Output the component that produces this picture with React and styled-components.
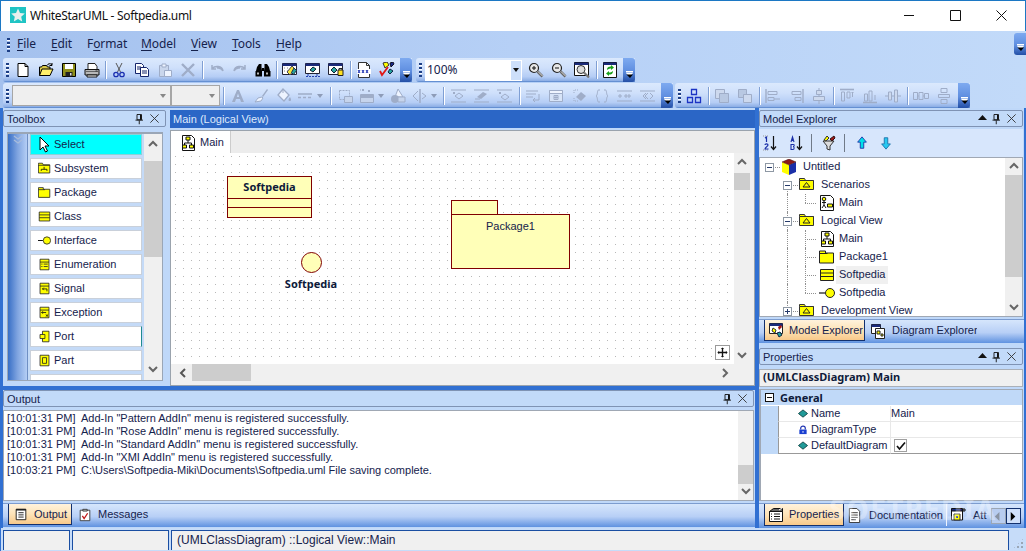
import React from "react";
import styled, { createGlobalStyle } from "styled-components";

const Global = createGlobalStyle`
  html, body { margin: 0; padding: 0; background: #fff; overflow: hidden; }
  * { box-sizing: border-box; }
`;
const UI = `"Noto Sans", "Open Sans", sans-serif`;
const TXT = `"Liberation Sans", Arial, sans-serif`;
const INK = "#15224c";

const Window = styled.div`
  width: 1026px; height: 551px; display: flex; flex-direction: column; overflow: hidden;
  font: 11px/1 ${TXT}; color: ${INK}; background: #bcd5f8; position: relative;
`;
const TitleBar = styled.header`
  height: 31px; flex: none; background: #fff; border-top: 1px solid #1c78c4; display: flex; align-items: center;
  padding: 0 1px 2px 9px; border-left: 1px solid #1c78c4; border-right: 1px solid #1c78c4;
`;
const TitleText = styled.span`
  font: 12px ${UI}; color: #111; margin-left: 4px; flex: 1; letter-spacing: -0.3px;
`;
const WinBtn = styled.div`
  width: 46px; height: 28px; display: flex; align-items: center; justify-content: center; color: #111;
`;
const Chrome = styled.div`
  flex: none; height: 77px; display: flex; flex-direction: column;
  background: linear-gradient(90deg, #a4c1ee 0%, #b6d0f6 50%, #c2daf9 100%);
`;
const MenuBar = styled.nav`
  height: 27px; display: flex; align-items: center; padding-left: 5px; position: relative;
`;
const MenuItem = styled.span`
  font: 12px ${UI}; color: ${INK}; width: ${p => p.$w}px; position: relative; top: -1px; letter-spacing: -0.1px;
  u { text-decoration: underline; text-underline-offset: 2px; }
`;
const Grip = styled.i`
  width: 3px; height: 14px; flex: none; display: block; margin: 0 ${p => p.$after || 5}px 0 ${p => p.$before || 2}px;
  background: repeating-linear-gradient(180deg, #1d3f86 0 2px, #fff 2px 2.6px, transparent 2.6px 4px);
`;
const ToolRow = styled.div`
  height: 25px; display: flex; padding-left: 3px; align-items: stretch;
`;
const Pill = styled.div`
  height: ${p => p.$h || 24}px; margin-left: ${p => p.$ml || 0}px; display: flex; align-items: center; padding-left: 1px;
  background: linear-gradient(180deg, #dbe9fd 0%, #cfe0fb 40%, #b5cdf5 78%, #8fb0e6 94%, #4f7fc8 100%);
  border-radius: 3px 0 0 3px;
`;
const ToolBtn = styled.div`
  width: ${p => p.$w || 23}px; height: 22px; flex: none; display: flex; align-items: center; justify-content: center; gap: 3px;
`;
const Sep = styled.i`
  width: ${p => p.$w || 5}px; flex: none; height: 18px; display: block; position: relative;
  &::after { content: ""; position: absolute; left: 50%; top: 0; height: 18px; width: 2px; background: linear-gradient(90deg, #7f9fd4 50%, #fff 50%); }
`;
const Chev = styled.div`
  width: 12px; height: ${p => p.$h || 25}px; flex: none; margin-left: ${p => p.$ml || 2}px; border-radius: 0 3px 3px 0;
  background: linear-gradient(180deg, #7eaaf0 0%, #5f8ee0 55%, #234fa6 100%);
  display: flex; align-items: flex-end; justify-content: center; padding-bottom: 3px;
`;
const MenuChev = styled(Chev)`
  position: absolute; right: 0; top: 2px; border-radius: 3px 0 0 3px; margin: 0;
`;
const FontCombo = styled.div`
  width: ${p => p.$w}px; height: 21px; flex: none; background: #efefef; border: 1.5px solid #a6a6a6;
  display: flex; align-items: center; justify-content: flex-end; padding-right: 4px;
`;
const ZoomCombo = styled.div`
  width: 97px; height: 21px; flex: none; background: #fff; display: flex; align-items: stretch; margin-right: 2px;
  font: 12px ${UI}; color: ${INK};
`;
const ZoomVal = styled.span`flex: 1; padding: 1px 0 0 2px;`;
const ZoomDrop = styled.span`
  width: 12px; background: #cddffa; border: 1px solid #fff;
  display: flex; align-items: center; justify-content: center;
`;
const Caret = styled.i`
  width: 0; height: 0; display: block; border-left: 3.5px solid transparent; border-right: 3.5px solid transparent;
  border-top: 4px solid ${p => p.$c || "#111"};
`;

const Dock = styled.main`
  flex: none; height: 420px; display: flex; padding: 0 2px 0 3px; gap: 4px; background: #3170d2;
`;
const LeftCol = styled.div`width: 752px; flex: none; display: flex; flex-direction: column; gap: 4px;`;
const TopRow = styled.div`height: 278px; flex: none; display: flex; background: #bcd5f8;`;
const RightCol = styled.div`width: 265px; flex: none; display: flex; flex-direction: column; background: #bcd5f8;`;

const Panel = styled.section`
  width: ${p => p.$w ? p.$w + "px" : "auto"}; flex: ${p => p.$w || p.$h ? "none" : 1}; height: ${p => p.$h ? p.$h + "px" : "auto"};
  display: flex; flex-direction: column; background: #bfd8f9; position: relative; min-width: 0;
`;
const PanelHead = styled.div`
  height: 17px; flex: none; margin: ${p => p.$m || "2px 1px 0 0"}; border: 1px solid #7f93b4; border-radius: 2px;
  background: #c2daf9; display: flex; align-items: center; padding: 0 5px 0 3px; font-size: 11px; color: ${INK};
`;
const HeadTitle = styled.span`flex: 1; position: relative; top: 1px;`;
const HeadIcons = styled.div`display: flex; align-items: center; gap: 3px;`;

const ToolFrame = styled.div`
  margin: 5px 4px 0; height: 249px; border: 1px solid #9aa6b6; border-top-width: 2px; display: flex; background: #f0f0f0; overflow: hidden;
`;
const Strip = styled.div`
  width: 20px; flex: none; background: linear-gradient(90deg, #386fc6 0%, #7fa4e0 50%, #b5cef5 100%); border-right: 1px solid #6f8fc4;
  display: flex; justify-content: center; padding-top: 1px;
`;
const ToolList = styled.div`
  width: 116px; flex: none; background: #c4daf7; padding: 0 2px 0 2px; overflow: hidden; display: flex; flex-direction: column; gap: 3px;
`;
const ToolItem = styled.div`
  flex: none; height: 21px; background: ${p => p.$on ? "#00ffff" : "#fff"}; border: 1px solid ${p => p.$on ? "#8ad2d8" : "#c9d0da"};
  border-right-color: ${p => p.$hot ? "#1f8a90" : p.$on ? "#8ad2d8" : "#c9d0da"};
  display: flex; align-items: center; padding-left: 7px; font-size: 11px; color: ${INK}; white-space: nowrap;
`;
const ToolIconBox = styled.span`width: 16px; display: flex; justify-content: flex-start; flex: none;`;

const ScrollV = styled.div`
  width: ${p => p.$w || 17}px; flex: none; background: #f0f0f0; display: flex; flex-direction: column; align-items: stretch;
`;
const ScrollBtn = styled.div`
  height: ${p => p.$h || 17}px; flex: none; display: flex; align-items: center; justify-content: center;
`;
const ScrollTrack = styled.div`flex: 1; min-height: 0; padding-top: ${p => p.$t || 0}px;`;
const ThumbV = styled.div`height: ${p => p.$h}px; background: #cdcdcd;`;
const ScrollH = styled.div`
  height: 17px; flex: none; display: flex; align-items: stretch; background: #f0f0f0; padding-left: 4px;
`;
const ScrollHBtn = styled.div`width: 17px; flex: none; display: flex; align-items: center; justify-content: center;`;
const TrackH = styled.div`flex: 1;`;
const ThumbH = styled.div`width: ${p => p.$w}px; height: 100%; background: #cdcdcd;`;

const MainHead = styled.div`
  height: 18px; margin: 2px 0 0 3px; flex: none; background: #2b66c6; color: #dfe9fb; display: flex; align-items: center; padding-left: 3px; font-size: 11px;
`;
const MainFrame = styled.div`
  margin: 2px 0 0 3px; flex: 1; min-height: 0; border: 1px solid #9aa3ad; background: #f0f0f0; display: flex; flex-direction: column;
  padding-right: 2px;
`;
const DocTabs = styled.div`height: 22px; flex: none; background: #ececec; display: flex;`;
const DocTab = styled.div`
  width: 60px; background: #fff; display: flex; align-items: center; padding-left: 9px; gap: 4px; border-right: 1px solid #ccc; font-size: 11px; color: ${INK};
  height: 23px; position: relative;
`;
const CanvasGrid = styled.div`
  flex: 1; min-height: 0; display: grid; grid-template-columns: 1fr 18px; grid-template-rows: 1fr 17px; margin-bottom: 4px;
`;
const Canvas = styled.div`
  position: relative; background-color: #fff; overflow: hidden;
  background-image: radial-gradient(circle at .5px .5px, #b8b8b8 .6px, transparent .7px);
  background-size: 8px 8px; background-position: 4px 3px;
`;
const ClassBox = styled.div`
  position: absolute; left: 56px; top: 23px; width: 85px; height: 42px; background: #ffffb8; border: 1px solid #800000;
  display: flex; flex-direction: column;
`;
const ClassName = styled.div`
  height: 22px; font: 700 11px/1 ${UI}; color: #0e1a3a; text-align: center; padding-top: 4px; border-bottom: 1px solid #800000;
`;
const ClassSlot = styled.div`height: 9px; border-bottom: 1px solid #800000;`;
const PkgTab = styled.div`
  position: absolute; left: 280px; top: 47px; width: 47px; height: 15px; background: #ffffb8; border: 1px solid #800000; border-bottom: 0;
`;
const PkgBody = styled.div`
  position: absolute; left: 280px; top: 61px; width: 119px; height: 55px; background: #ffffb8; border: 1px solid #800000;
  text-align: center; padding-top: 6px; font-size: 11px; color: ${INK};
`;
const Lollipop = styled.div`
  position: absolute; left: 130px; top: 99px; width: 21px; height: 21px; border-radius: 50%; background: #ffffb8; border: 1px solid #800000;
`;
const LollipopLabel = styled.div`
  position: absolute; left: 100px; width: 80px; top: 125px; text-align: center; font: 700 11px/1 ${UI}; color: #0e1a3a;
`;
const NavBtn = styled.div`
  position: absolute; right: 4px; bottom: 4px; width: 15px; height: 15px; background: #fff; border: 1px solid #9a9a9a;
  display: flex; align-items: center; justify-content: center;
`;

const OutputPanel = styled(Panel)`height: 138px; flex: none;`;
const OutFrame = styled.div`
  margin: 3px 1px 0 0; height: 91px; flex: none; border: 1px solid #a0a8b4; background: #fff; display: flex;
`;
const OutList = styled.div`flex: 1; padding: 1px 0 0 3px;`;
const OutRow = styled.div`
  height: 13px; display: flex; font-size: 11px; line-height: 13px; white-space: nowrap; color: ${INK};
`;
const OutTime = styled.span`width: 74px; flex: none;`;
const TabBar = styled.div`
  height: ${p => p.$h || 24}px; margin-top: ${p => p.$mt || 2}px; flex: none; display: flex; align-items: flex-start; padding-left: ${p => p.$pl || 5}px; position: relative; overflow: hidden;
  background: linear-gradient(180deg, #d6e6fc 0%, #b7cff6 55%, #5f92e0 100%);
  border-top: 1px solid #7c9ccf;
`;
const Tab = styled.div`
  height: ${p => p.$h || 21}px; width: ${p => p.$w}px; flex: none; display: flex; align-items: center; padding-left: ${p => p.$pl || 6}px; gap: ${p => p.$gap || 7}px;
  font-size: 11px; color: ${INK}; white-space: nowrap; overflow: hidden;
  ${p => p.$on ? `background: linear-gradient(180deg, #fff2dc 0%, #fde3b8 50%, #f8c98a 100%); border: 1px solid #12306e; border-top: 0;` : ""}
  ${p => p.$div ? `border-left: 1px solid #eef4ff;` : ""}
`;
const ModelBar = styled.div`
  height: 28px; margin: 2px 1px 0 0; flex: none; background: #d7e6fc; display: flex; align-items: center;
`;
const MBtn = styled.div`width: ${p => p.$w || 25}px; flex: none; display: flex; justify-content: center;`;
const MSep = styled.i`width: 1px; height: 18px; background: #707a88; margin: 0 ${p => p.$r}px 0 ${p => p.$l}px; display: block;`;
const TreeFrame = styled.div`
  height: 160px; flex: none; margin-right: 1px; border: 1px solid #a0a8b4; background: #fff; display: flex; overflow: hidden;
`;
const Tree = styled.div`flex: 1; overflow: hidden;`;
const TreeRow = styled.div`height: 18px; display: flex; align-items: center; font-size: 11px; color: ${INK};`;
const Cell = styled.span`
  width: 18px; height: 18px; flex: none; position: relative; display: block;
  &::before { content: ""; position: absolute; left: 9px; top: ${p => p.$v === "top" || !p.$v ? "9px" : "0"};
    bottom: ${p => p.$v === "end" ? "9px" : "0"}; border-left: 1px dotted ${p => p.$v ? "#909090" : "transparent"}; }
  &::after { content: ""; position: absolute; left: 9px; top: 9px; width: 11px; border-top: 1px dotted ${p => p.$h ? "#909090" : "transparent"}; }
`;
const Expander = styled.b`
  position: absolute; left: 5px; top: 5px; width: 9px; height: 9px; background: #fff; border: 1px solid #8e98a4; z-index: 1; display: block; font-weight: 400;
  &::before { content: ""; position: absolute; left: 1px; right: 1px; top: 3px; height: 1px; background: #253a6a; }
  &::after { content: ""; position: absolute; top: 1px; bottom: 1px; left: 3px; width: 1px; background: ${p => p.$plus ? "#253a6a" : "transparent"}; }
`;
const TreeIcon = styled.span`width: 16px; margin: 0 ${p => p.$deep ? 1 : 3}px 0 ${p => p.$deep ? 5 : 3}px; display: flex; justify-content: center; flex: none; position: relative; background: #fff; z-index: 1;`;
const TreeLabel = styled.span`
  padding: 3px 3px; height: 18px; background: ${p => p.$sel ? "#f0f0f0" : "transparent"}; white-space: nowrap;
`;
const SubHead = styled.div`
  height: 18px; margin: 4px 1px 0 0; flex: none; background: #f0f0f0; border: 1px solid #aab0b8; font: 700 11px/1 ${UI}; color: #0e1a3a;
  padding: 1px 0 0 3px;
`;
const PropFrame = styled.div`
  height: 112px; margin: 2px 1px 0 0; flex: none; border: 1px solid #a0a8b4; border-left-width: 2px; background: #fff;
`;
const PropGroup = styled.div`
  height: 16px; background: #c0d9f8; border-bottom: 1px solid #fff; display: flex; align-items: center; font: 700 11px/1 ${UI}; color: #0e1a3a;
`;
const GroupBox = styled.span`
  width: 9px; height: 9px; border: 1px solid #111; margin: 0 6px 0 4px; position: relative; display: block; background: #fff;
  &::before { content: ""; position: absolute; left: 1px; right: 1px; top: 3px; height: 1px; background: #111; }
`;
const PropRow = styled.div`
  height: 16px; display: grid; grid-template-columns: 17px 113px 1fr; font-size: 11px; color: ${INK};
`;
const PropGutter = styled.span`background: #c0d9f8;`;
const PropName = styled.span`
  border-right: 1px solid #e8e8e8; border-bottom: 1px solid ${p => p.$last ? "#999" : "#e8e8e8"}; border-left: 1px solid #999; display: flex; align-items: center; padding-left: 29px; gap: 3px;
`;
const PropVal = styled.span`
  border-bottom: 1px solid ${p => p.$last ? "#999" : "#e8e8e8"}; display: flex; align-items: center; padding-left: ${p => p.$pl || 0}px;
`;
const PropIcon = styled.span`margin-left: -10px; display: flex; width: 10px; justify-content: center;`;
const Check = styled.span`
  width: 13px; height: 13px; border: 1px solid #a0a0a0; background: #fff; display: flex; align-items: center; justify-content: center;
`;
const ArrowBtn = styled.div`
  position: absolute; top: 4px; left: ${p => p.$l}px; width: 15px; height: 16px; display: flex; align-items: center; justify-content: center;
  border: 1px solid ${p => p.$on ? "#12306e" : "#9aa6b6"}; background: ${p => p.$on ? "#cfe0fb" : "#b8cdf0"};
`;
const Watermark = styled.div`
  position: absolute; left: 70px; bottom: 0px; font: 700 29px ${UI}; color: rgba(255,255,255,.28); letter-spacing: 1px; pointer-events: none;
`;
const StatusBar = styled.footer`
  height: 23px; flex: none; background: #c6dcf9; padding: 2px 0 1px 2px; display: flex; gap: 2px; border-left: 1px solid #3170d2; position: relative;
`;
const StatusPane = styled.div`
  width: ${p => p.$w}px; background: #f0f0f0; border: 1px solid #1a4ea2; border-bottom: 0; font-size: 12px; padding: 3px 0 0 5px; color: ${INK}; white-space: nowrap;
`;
const Resize = styled.div`
  position: absolute; right: 2px; bottom: 2px; width: 11px; height: 11px;
  background: radial-gradient(circle at 1px 1px, #9aa6b6 1px, transparent 1.1px) 0 0 / 4px 4px;
  clip-path: polygon(100% 0, 100% 100%, 0 100%);
`;

const Svg = styled.svg`display: block; flex: none;`;
const G = "#9fadc8"; const W = "#eef4ff"; const N = "#14246b"; const Y = "#ffff00";
const icons = {
  new: <><path d="M3 1.500h7l3 3v10H3z" fill="#fff" stroke="#000"/><path d="M10 1.500v3h3" fill="none" stroke="#000"/></>,
  open: <><path d="M1.500 13.500V5h2l1-1.500h4L9.500 5H12v2" fill="#d8c84a" stroke="#000"/><path d="M1.500 13.500l2.500-6.500h11l-3 6.500z" fill="#ffef6a" stroke="#000"/><path d="M9 3.500C10 1.500 12 1.200 14 2.500M14 1v2.500h-2.500" fill="none" stroke="#000"/></>,
  save: <><path d="M1.500 1.500h13v13h-13z" fill="#8f8f1a" stroke="#000"/><path d="M4 2h8v5H4z" fill="#fff"/><path d="M4.500 10h7v4.500h-7z" fill="#222"/><path d="M9 11h1.500v2.500H9z" fill="#ddd"/></>,
  print: <><path d="M4 1.500h7l2 3v3H4z" fill="#fff" stroke="#222"/><path d="M1 7.500h14v5.500H1z" fill="#b8b8b8" stroke="#111"/><path d="M3 13h10v2H3z" fill="#fff" stroke="#111"/><path d="M2 9.500h12" stroke="#666"/><path d="M11.500 8.500h2v1h-2z" fill="#333"/></>,
  cut: <><path d="M5 1l4.500 9M11 1l-4.500 9" stroke="#555" fill="none"/><circle cx="5" cy="12.500" r="2.200" fill="none" stroke="#1b2fb0" strokeWidth="1.300"/><circle cx="11" cy="12.500" r="2.200" fill="none" stroke="#1b2fb0" strokeWidth="1.300"/></>,
  copy: <><path d="M1.500 1.500h6l2 2v8h-8z" fill="#fff" stroke={N}/><path d="M6.500 5.500h6l2 2v7h-8z" fill="#fff" stroke={N}/><path d="M3 5h4M3 7h3M8 9h5M8 11h5" stroke={N}/></>,
  paste: <><path d="M2.500 3.500h9v11h-9z" fill="#c9d6ec" stroke={G}/><path d="M5 2h4v3H5z" fill={W} stroke={G}/><path d="M7.500 8.500h7v6h-7z" fill={W} stroke={G}/></>,
  del: <path d="M2 2l12 12M14 2L2 14" stroke={G} strokeWidth="2.400"/>,
  undo: <path d="M3 6.500c3-3 10-3 11 2.500-1-2-3-3.500-6-3M3 3v4h4" fill="none" stroke={G} strokeWidth="1.500"/>,
  redo: <path d="M13 6.500c-3-3-10-3-11 2.500 1-2 3-3.500 6-3M13 3v4H9" fill="none" stroke={G} strokeWidth="1.500"/>,
  binoc: <><path d="M4 2h2.500v3L7 9H1l1-4zM9.500 2H12l2 3 1 4H9l.500-4z" fill="#000"/><path d="M.5 9h6.500v5.500H.5zM9 9h6.500v5.500H9z" fill="#000"/><path d="M7 6h2v3H7z" fill="#000"/><path d="M2 10.500h2v2H2zM11 10.500h2v2h-2z" fill="#bbb"/></>,
  d1: <><path d="M.5 1.500h14v11H.5z" fill="#fff" stroke="#223"/><path d="M.5 1.500h14V4H.5z" fill="#1a2a7a"/><path d="M2 6h1M5 6h1M2 9h1M5 9h1" stroke="#888"/><path d="M10 4l3 3-5 6-3-3z" fill="#f4e23c" stroke="#445"/><path d="M12 6l2.500 2.500-3 4-2-2z" fill="#29a3a0" stroke="#234"/></>,
  d2: <><path d="M.5 1.500h14v10H.5z" fill="#fff" stroke="#223"/><path d="M.5 1.500h14V4H.5z" fill="#1a2a7a"/><path d="M8 5l3 2-3 3-3-2z" fill="#2aa6a0" stroke="#123"/><path d="M1 14.500h14" stroke="#2340b0" strokeDasharray="2 1"/><path d="M3 12v2M12 12v2" stroke="#2340b0"/></>,
  d3: <><path d="M.5 1.500h14v11H.5z" fill="#fff" stroke="#223"/><path d="M.5 1.500h14V4H.5z" fill="#1a2a7a"/><path d="M6 5l3 3-3 3-3-3z" fill="#2aa6a0" stroke="#123"/><path d="M10 8h5v5.500h-5z" fill="#ffe020" stroke="#222"/><path d="M11 8V6.500h3V8" fill="none" stroke="#222"/></>,
  xml: <><path d="M2.500.5h8l3 3v12h-11z" fill="#fff" stroke="#333"/><path d="M10.500.5v3h3" fill="none" stroke="#333"/><path d="M1 7h14v5H1z" fill="#fff"/><path d="M2 8l2 3M4 8l-2 3M6 8l2 3M8 8l-2 3M10 8l2 3M12 8l-2 3" stroke="#1a2fb0"/></>,
  tools: <><path d="M4 1l4-1 2 3-4 3z" fill={Y} stroke="#333"/><path d="M11 1l3-1 1 2-3 3z" fill="#1a2a8a" stroke="#112"/><path d="M1 9l2 4 6-8" fill="none" stroke="#e01818" strokeWidth="1.800"/><path d="M11 7l3 2-3 3-2-2z" fill="#23a5a0" stroke="#124"/></>,
  zin: <><circle cx="6" cy="6" r="4.500" fill="#e8e8e8" stroke="#222" strokeWidth="1.200"/><path d="M4 6h4M6 4v4" stroke="#111"/><path d="M9.500 9.500l5 5" stroke="#666" strokeWidth="2.600"/><path d="M10 9.500l4.500 4.500" stroke="#ddd"/></>,
  zout: <><circle cx="6" cy="6" r="4.500" fill="#e8e8e8" stroke="#222" strokeWidth="1.200"/><path d="M4 6h4" stroke="#111"/><path d="M9.500 9.500l5 5" stroke="#666" strokeWidth="2.600"/><path d="M10 9.500l4.500 4.500" stroke="#ddd"/></>,
  zfit: <><path d="M.5.5h14v13H.5z" fill="#fff" stroke="#111"/><path d="M.5.5h14V3H.5z" fill="#1a2a7a"/><circle cx="7" cy="7.500" r="4" fill="#ddd" stroke="#333"/><path d="M10 10.500l5 5" stroke="#777" strokeWidth="2.200"/></>,
  refresh: <><path d="M1.500.5h13v15h-13z" fill="#fff" stroke="#111"/><path d="M1.500.5h13V3h-13z" fill="#1a2a7a"/><path d="M5 8c0-3 2-3.500 4-3.500V3l3 2.500L9 8V6.500C7.500 6.500 6.500 7 5 8z" fill="#1aa01a"/><path d="M11 9c0 3-2 3.500-4 3.500V14l-3-2.500L7 9v1.500c1.500 0 2.500-.5 4-1.500z" fill="#1aa01a"/></>,
  fontA: <path d="M2 14L7 2h2l5 12h-3l-1-3H6l-1 3zM6.800 9h2.400L8 5.500z" fill={G}/>,
  brush: <><path d="M9 8l5-7 1 1-5 7z" fill={G}/><path d="M5 10l4-1 1 1-2 3-6 1z" fill={W} stroke={G}/></>,
  bucket: <><path d="M7 1l6 6-5 6-6-6z" fill={W} stroke={G} strokeWidth="1.300"/><path d="M7 1V5" stroke={G}/><path d="M14 9c1 2 1.500 3 .5 4h-1.500c-1-1-.500-2 1-4z" fill={G}/></>,
  line: <path d="M0 6h14M0 9.500h3M5 9.500h3M10 9.500h3" stroke={G} strokeWidth="1.600"/>,
  shadow: <><path d="M1.500 2.500h10v9h-10z" fill="none" stroke={G} strokeDasharray="2 1"/><path d="M6.500 8.500h8v6h-8z" fill="#c6d4ec" stroke={G}/></>,
  fill2: <><path d="M1 2h1M3 1l2 2M5 1L3 3M9 2l2 2M11 2L9 4" stroke={G}/><path d="M1.500 6.500h13v8h-13z" fill="#c6d4ec" stroke={G}/><path d="M2 7h12v3H2z" fill={G}/></>,
  shape: <><path d="M8 1l5 8H5z" fill={W} stroke={G}/><circle cx="5" cy="11" r="4" fill={G}/><path d="M8 9h7v5H8z" fill="#c6d4ec" stroke={G}/></>,
  arrows: <><path d="M8 1v14" stroke={G} strokeWidth="1.500"/><path d="M6 3L1 8l5 5M10 5l4 3-4 3" fill="none" stroke={G}/></>,
  hdr1: <><path d="M0 2h15M0 14h15" stroke={G}/><path d="M8 5l4 3-4 3-4-3z" fill="none" stroke={G}/><path d="M2 4l2 2M4 4L2 6" stroke={G}/></>,
  hdr2: <><path d="M0 2h15M0 14h15M1 11h5" stroke={G}/><path d="M3 9l6-5 4 2-6 5z" fill={G}/></>,
  hdr3: <><path d="M0 2h15M0 14h15" stroke={G}/><path d="M8 6l4 3-4 3-4-3z" fill="none" stroke={G}/><path d="M2 4l2 2M4 4L2 6" stroke={G}/></>,
  ret: <><path d="M1 3h12M1 6h10M1 9h7" stroke={G}/><path d="M14 6v6H8M10 10l-2 2 2 2" fill="none" stroke={G}/></>,
  win: <><path d="M1.500 2.500h13v11h-13z" fill="#d7e4f8" stroke={G}/><path d="M1.500 2.500h13v3h-13z" fill={W} stroke={G}/><path d="M6 7.500h4v4H6zM8 7v5M6 9.500h4" stroke={G} fill="none"/></>,
  chain: <><path d="M4 2h4M3 2v3M4 13h4M3 10v3" stroke={G} strokeDasharray="1 1"/><path d="M10 4l5 4-5 5-5-4z" fill={G}/></>,
  brace: <path d="M6 2H4.500C3 2 4 7 2 8c2 1 1 6 2.500 6H6M10 2h1.500C13 2 12 7 14 8c-2 1-1 6-2.500 6H10" fill="none" stroke={G}/>,
  hash: <><path d="M0 3h15M0 13h15" stroke={G}/><path d="M1 8h4M3 6v4M7 8h7M9 6v4M12 6v4" stroke={G}/></>,
  dbl: <><path d="M0 3h15M0 13h15" stroke={G}/><path d="M6 5L3 8l3 3M10 5l3 3-3 3" fill="none" stroke={G}/><path d="M8 5L5 8l3 3" fill="none" stroke={G}/></>,
  org: <path d="M5.500 1.500h5v5h-5zM1.500 9.500h5v5h-5zM9.500 9.500h5v5h-5z" fill="none" stroke="#1c34c4" strokeWidth="1.300"/>,
  front: <><path d="M1.500 1.500h9v9h-9z" fill="#cdd9ee" stroke={G}/><path d="M5.500 5.500h9v9h-9z" fill="#b8c8e2" stroke={G}/></>,
  back: <><path d="M1.500 1.500h8v8h-8z" fill="#b8c8e2" stroke={G}/><path d="M6.500 6.500h8v8h-8z" fill="#cdd9ee" stroke={G}/></>,
  al1: <><path d="M1 1v14" stroke={G} strokeWidth="1.400"/><path d="M3 3.500h9v3H3zM3 9.500h6v3H3z" fill="none" stroke={G}/><path d="M15 11h-6" stroke={G}/></>,
  al2: <><path d="M15 1v14" stroke={G} strokeWidth="1.400"/><path d="M4 3.500h9v3H4zM7 9.500h6v3H7z" fill="none" stroke={G}/></>,
  al3: <><path d="M8 0v16" stroke={G}/><path d="M5.500 2.500h5v4h-5zM2.500 8.500h11v4h-11z" fill="#cdd9ee" stroke={G}/></>,
  al4: <><path d="M1 1.500h14" stroke={G} strokeWidth="1.600"/><path d="M2.500 4h3v9h-3zM8 4h3v6H8z" fill="none" stroke={G}/><path d="M13.500 9V4M12.500 5l1-1 1 1" fill="none" stroke={G}/></>,
  al5: <><path d="M1 14.500h14" stroke={G} strokeWidth="1.600"/><path d="M2.500 6h3v7h-3zM7 3h3v10H7z" fill="none" stroke={G}/><path d="M13 7v5" stroke={G}/></>,
  al6: <><path d="M0 8h16" stroke={G}/><path d="M3.500 4h3v8h-3zM9.500 2h3v12h-3z" fill="#cdd9ee" stroke={G}/></>,
  sp1: <><path d="M.5 4.500h4v7h-4zM6 4.500h4v7H6zM11.500 5.500h4v5h-4z" fill="none" stroke={G}/><path d="M4 8h2M10 8h2" stroke={G}/></>,
  sp2: <><path d="M5 .5h6v4H5zM2.500 6.500h11v3h-11zM5 11.500h6v4H5z" fill="none" stroke={G}/></>,
  pin: <><path d="M4 2h6v7H4zM2 9.500h10M7 10v5" stroke="#111" fill="none" strokeWidth="1.200"/><path d="M8 2.500h2v6.500H8z" fill="#111"/></>,
  close: <path d="M1.500 1.500l9 9M10.500 1.500l-9 9" stroke="#333"/>,
  up: <path d="M1 7l4.500-5 4.500 5z" fill="#111"/>,
  mDiag: <><path d="M2.500.5h9l3 3v12h-12z" fill="#fff" stroke="#111"/><path d="M6 2h4v3H6zM2.500 10h4v3h-4zM9.500 10h4v3h-4z" fill={Y} stroke="#111"/><path d="M8 5v3M4.500 10V8h7v2" fill="none" stroke="#111"/></>,
  seq: <><path d="M1.500.5h10l3 3v12h-13z" fill="#fff" stroke="#111"/><circle cx="5" cy="4" r="1.800" fill={Y} stroke="#111"/><path d="M5 6v4M3 7.500h4M5 10l-2 3M5 10l2 3" stroke="#111" fill="none"/><path d="M8.500 9h5v3h-5z" fill={Y} stroke="#111"/></>,
  cube: <><path d="M8 0l7 3-7 3-7-3z" fill="#8b1a1a"/><path d="M1 3l7 3v10l-7-3z" fill={Y}/><path d="M15 3L8 6v10l7-3z" fill="#1a2fa8"/><path d="M8 0l7 3-7 3-7-3z" fill="none" stroke="#401010" strokeWidth=".5"/></>,
  fTri: <><path d="M.5 3.500V1.500h5l1 2h8v9H.5z" fill={Y} stroke="#333"/><path d="M.5 3.500h14" stroke="#333"/><path d="M7.500 5.500l3.500 4.500H4z" fill="none" stroke="#222"/></>,
  folder: <><path d="M.5 2h6v2h8v10H.5z" fill={Y} stroke="#222"/><path d="M.5 4.500h8" stroke="#222"/></>,
  klass: <><path d="M1.500 2.500h13v11h-13z" fill={Y} stroke="#222"/><path d="M1.500 6h13M1.500 9.500h13" stroke="#222"/></>,
  iface: <><circle cx="11" cy="8" r="4.500" fill={Y} stroke="#222"/><path d="M0 8h6" stroke="#111" strokeWidth="1.200"/></>,
  sub: <><path d="M.5 3V1.500h5l1 2h8v10H.5z" fill={Y} stroke="#222"/><path d="M.5 4h14" stroke="#222"/><path d="M4 11V9h7v2M7.500 6v3" fill="none" stroke="#111"/></>,
  enum: <><path d="M2.500 1.500h11v13h-11z" fill={Y} stroke="#222"/><path d="M2.500 5h11" stroke="#222"/><path d="M4 7.500h1.500M7 7.500h5M4 10.500h1.500M7 10.500h5" stroke="#223"/></>,
  signal: <><path d="M2.500 1.500h11v13h-11z" fill={Y} stroke="#222"/><path d="M2.500 5h11" stroke="#222"/><path d="M11 8.500H5.500M7 7L5.500 8.500 7 10M11 8.500v3" fill="none" stroke="#111"/></>,
  exc: <><path d="M2.500 1.500h11v13h-11z" fill={Y} stroke="#222"/><path d="M2.500 5h11" stroke="#222"/><path d="M10 8H4.500M6 6.500L4.500 8 6 9.500M9.500 10.500l3 2.500M12.500 10.500l-3 2.500" fill="none" stroke="#111"/></>,
  port: <><path d="M5.500 1.500h8v13h-8z" fill={Y} stroke="#222"/><path d="M2.500 5.500h6v5h-6z" fill={Y} stroke="#222"/></>,
  part: <><path d="M2.500 1.500h11v13h-11z" fill={Y} stroke="#222"/><path d="M5.500 4.500h5v7h-5z" fill={Y} stroke="#222"/></>,
  assoc: <path d="M0 9h15M8 3v12" stroke="#111"/>,
  cursor: <path d="M2 0v13l3-3 2.500 5 2-1-2.500-5H11z" fill="#fff" stroke="#000"/>,
  tDiag: <><path d="M2.500.5h9l3 3v12h-12z" fill="#fff" stroke="#111"/><path d="M6 2h4v3H6zM2.500 10h4v3h-4zM9.500 10h4v3h-4z" fill={Y} stroke="#111"/><path d="M8 5v3M4.500 10V8h7v2" fill="none" stroke="#111"/></>,
  sort12: <><path d="M0 1h6M0 15h6" stroke="#999" strokeDasharray="1 1"/><path d="M2 3l1.500-1V7M2 10c0-1.500 3-1.500 3 0S2 12 2 14h3.500" fill="none" stroke="#1a2fa8" strokeWidth="1.200"/><path d="M10.500 1v13M8 11.500l2.500 3 2.500-3" fill="none" stroke="#111" strokeWidth="1.200"/></>,
  sortAB: <><path d="M2 7l1.500-5L5 7M2.500 5.500h2M2 9.500h2.500c1 0 1 2-.5 2 1.500 0 1.500 3 0 3H2z" fill="none" stroke="#1a2fa8" strokeWidth="1.100"/><path d="M10.500 1v13M8 11.500l2.500 3 2.500-3" fill="none" stroke="#111" strokeWidth="1.200"/></>,
  funnel: <><path d="M2 6h11L9 11v4l-3-1v-3z" fill="#ddd" stroke="#333"/><path d="M3 5L6 1l2 2-3 3z" fill={Y} stroke="#333"/><path d="M9 4l4-3 1 2-3 3z" fill="#a01818" stroke="#311"/></>,
  arrUp: <path d="M8 1l5 6h-3v7H6V7H3z" fill="#00e0e8" stroke="#1a2fa8"/>,
  arrDn: <path d="M8 15l5-6h-3V2H6v7H3z" fill="#28c8f0" stroke="#1a6fa8"/>,
  tabModel: <><path d="M1.500 1.500h13v10h-13z" fill="#fff" stroke="#222"/><path d="M1.500 1.500h13V4h-13z" fill="#1a2a7a"/><path d="M5 6l3 2-1 3-3-2z" fill={Y} stroke="#333"/><path d="M10 5l3-2 1 2-3 3z" fill="#a01818"/><path d="M9 11l3-1 2 3-3 2z" fill="#23a5a0" stroke="#124"/></>,
  tabDiag: <><path d="M1.500 1.500h9v9h-9z" fill="#fff" stroke="#222"/><path d="M1.500 1.500h9V4h-9z" fill="#1a2a7a"/><path d="M5.500 5.500h9v10h-9z" fill="#fff" stroke="#222"/><path d="M7 8h3v3H7zM11 11h2v2h-2z" fill={Y} stroke="#222"/></>,
  tabProp: <><path d="M1.500 4.500h13v10h-13z" fill="#fff" stroke="#111"/><path d="M1.500 4.500l4-3h9v3z" fill="#666" stroke="#111"/><path d="M3 7h1M6 7h6M3 9.500h1M6 9.500h6M3 12h1M6 12h6" stroke="#111"/><path d="M11 3l3-2" stroke="#fff"/></>,
  tabDoc: <><path d="M2.500.5h8l3 3v12h-11z" fill="#fff" stroke="#333"/><path d="M4.500 5h7M4.500 7.500h7M4.500 10h7M4.500 12.500h5" stroke="#333"/></>,
  tabAttr: <><path d="M.5 1.500h11v4h-11z" fill="#1a2a7a" stroke="#111"/><path d="M.5 4h11v9h-11z" fill="#fff" stroke="#111"/><path d="M3 7h6v6H3z" fill={Y} stroke="#333"/><path d="M5 9l2 2M7 9l-2 2" stroke="#1a2fa8"/><path d="M13 1v4M11 3h4" stroke="#111"/></>,
  tabOut: <><path d="M2.500 2.500h11v12h-11z" fill="#fff" stroke="#111"/><path d="M2.500 2.500h11V4h-11z" fill="#111"/><path d="M5 6.500h6M5 9h6M5 11.500h6" stroke="#111"/></>,
  tabMsg: <><path d="M2.500 2.500h11v12h-11z" fill="#fff" stroke="#333"/><path d="M5.500 1.500h5v2h-5z" fill="#ccc" stroke="#333"/><path d="M5 9l2 3 4-6" fill="none" stroke="#c01818" strokeWidth="1.500"/></>,
  diamond: <path d="M5.500 1l5 4-5 4-5-4z" fill="#1f9a98" stroke="#144"/>,
  lock: <><path d="M3 5V3.500c0-3 5-3 5 0V5" fill="none" stroke="#1a2fb0" strokeWidth="1.300"/><path d="M1.500 5h8v5h-8z" fill="#1a3fd0"/><path d="M5 6.500h1v2H5z" fill="#fff"/></>,
  check: <path d="M1 5l2.500 3L9 1.500" fill="none" stroke="#111" strokeWidth="1.700"/>,
  move: <path d="M6 0l2 2H6.800v3.200H10V4l2 2-2 2V6.800H6.800V10H8l-2 2-2-2h1.200V6.800H2V8L0 6l2-2v1.200h3.200V2H4z" fill="#111" transform="translate(.5 .5)"/>,
  chevUp: <path d="M1 6l4-4 4 4" fill="none" stroke="#666" strokeWidth="2"/>,
  chevDn: <path d="M1 2l4 4 4-4" fill="none" stroke="#666" strokeWidth="2"/>,
  chevL: <path d="M6 1L2 5l4 4" fill="none" stroke="#555" strokeWidth="2"/>,
  chevR: <path d="M2 1l4 4-4 4" fill="none" stroke="#666" strokeWidth="2"/>,
  tChevDn: <path d="M1 1l4 3 4-3M1 5l4 3 4-3" fill="none" stroke="#a8bcdc" strokeWidth="1.300"/>,
  tbChev: <><path d="M1 1h7v1.500H1z" fill="#fff"/><path d="M1 3h7L4.500 7z" fill="#fff"/><path d="M1 1.500h6M1 4h6.500L4.500 7.500z" fill="#000" transform="translate(.5 .5)"/></>,
  triL: <path d="M7 1L2 6l5 5z" fill="#8a94a4"/>,
  triR: <path d="M3 1l5 5-5 5z" fill="#000"/>,
};
const Ico = ({ n, s = 16, vb = 16 }) => <Svg width={s} height={s} viewBox={`0 0 ${vb} ${vb}`} aria-hidden="true">{icons[n]}</Svg>;
const B = ({ n, w }) => <ToolBtn $w={w}><Ico n={n} /></ToolBtn>;
const Bd = ({ n, w }) => <ToolBtn $w={w}><Ico n={n} /><Caret $c="#8e9cb8" /></ToolBtn>;
const ChevGlyph = () => <Svg width="9" height="9" viewBox="0 0 9 9">{icons.tbChev}</Svg>;

const Head = ({ title, up, m }) => (
  <PanelHead $m={m}>
    <HeadTitle>{title}</HeadTitle>
    <HeadIcons>
      {up && <Ico n="up" s={11} vb={11} />}
      <Ico n="pin" s={12} vb={16} />
      <Ico n="close" s={11} vb={12} />
    </HeadIcons>
  </PanelHead>
);
const toolItems = [
  ["cursor", "Select", true], ["sub", "Subsystem"], ["folder", "Package"], ["klass", "Class"], ["iface", "Interface"],
  ["enum", "Enumeration"], ["signal", "Signal"], ["exc", "Exception"], ["port", "Port", false, true], ["part", "Part"], ["assoc", "Association"],
];
const log = [
  ["[10:01:31 PM]", 'Add-In "Pattern AddIn" menu is registered successfully.'],
  ["[10:01:31 PM]", 'Add-In "Rose AddIn" menu is registered successfully.'],
  ["[10:01:31 PM]", 'Add-In "Standard AddIn" menu is registered successfully.'],
  ["[10:01:31 PM]", 'Add-In "XMI AddIn" menu is registered successfully.'],
  ["[10:03:21 PM]", "C:\\Users\\Softpedia-Miki\\Documents\\Softpedia.uml File saving complete."],
];
const tree = [
  { cells: [{ ex: "-" }], icon: "cube", label: "Untitled" },
  { cells: [{}, { v: "top", h: 1, ex: "-" }], icon: "fTri", label: "Scenarios" },
  { cells: [{}, { v: "through" }, { v: "end", h: 1 }], icon: "seq", label: "Main", deep: 1 },
  { cells: [{}, { v: "through", h: 1, ex: "-" }], icon: "fTri", label: "Logical View" },
  { cells: [{}, { v: "through" }, { v: "through", h: 1 }], icon: "mDiag", label: "Main", deep: 1 },
  { cells: [{}, { v: "through" }, { v: "through", h: 1 }], icon: "folder", label: "Package1", deep: 1 },
  { cells: [{}, { v: "through" }, { v: "through", h: 1 }], icon: "klass", label: "Softpedia", sel: true, deep: 1 },
  { cells: [{}, { v: "through" }, { v: "end", h: 1 }], icon: "iface", label: "Softpedia", deep: 1 },
  { cells: [{}, { v: "through", h: 1, ex: "+" }], icon: "fTri", label: "Development View" },
];

export default function App() {
  return (
    <Window>
      <Global />
      <TitleBar>
        <Svg width="16" height="16" viewBox="0 0 16 16"><path d="M0 0h16v16H0z" fill="#1fc4c4" /><path d="M8 1.500l2 4.500 4.800.5-3.600 3.200 1 4.800L8 12l-4.200 2.500 1-4.800L1.200 6.500 6 6z" fill="#e8f0ee" /></Svg>
        <TitleText>WhiteStarUML - Softpedia.uml</TitleText>
        <WinBtn><Svg width="11" height="11" viewBox="0 0 11 11"><path d="M0 5.500h10" stroke="#111" /></Svg></WinBtn>
        <WinBtn><Svg width="11" height="11" viewBox="0 0 11 11"><path d="M.5.5h10v10H.5z" fill="none" stroke="#111" /></Svg></WinBtn>
        <WinBtn><Svg width="11" height="11" viewBox="0 0 11 11"><path d="M.5.5l10 10M10.500.5l-10 10" stroke="#111" /></Svg></WinBtn>
      </TitleBar>
      <Chrome>
        <MenuBar>
          <Grip $after={7} />
          <MenuItem $w={34}><u>F</u>ile</MenuItem>
          <MenuItem $w={36}><u>E</u>dit</MenuItem>
          <MenuItem $w={54}>F<u>o</u>rmat</MenuItem>
          <MenuItem $w={50}><u>M</u>odel</MenuItem>
          <MenuItem $w={41}><u>V</u>iew</MenuItem>
          <MenuItem $w={44}><u>T</u>ools</MenuItem>
          <MenuItem $w={40}><u>H</u>elp</MenuItem>
          <MenuChev $h={22}><ChevGlyph /></MenuChev>
        </MenuBar>
        <ToolRow>
          <Pill>
            <Grip $after={2} />
            <B n="new" /><B n="open" /><B n="save" /><B n="print" /><Sep $w={4} />
            <B n="cut" /><B n="copy" /><B n="paste" /><B n="del" /><Sep $w={6} />
            <B n="undo" /><B n="redo" /><B n="binoc" /><Sep $w={4} />
            <B n="d1" /><B n="d2" /><B n="d3" /><Sep $w={5} />
            <B n="xml" /><B n="tools" />
            <Chev $h={24}><ChevGlyph /></Chev>
          </Pill>
          <Pill $ml={4}>
            <Grip $before={2} $after={3} />
            <ZoomCombo><ZoomVal>100%</ZoomVal><ZoomDrop><Caret /></ZoomDrop></ZoomCombo>
            <B n="zin" /><B n="zout" /><B n="zfit" /><Sep />
            <B n="refresh" />
            <Chev $h={24}><ChevGlyph /></Chev>
          </Pill>
        </ToolRow>
        <ToolRow>
          <Pill $h={25}>
            <Grip $after={3} />
            <FontCombo $w={159}><Caret $c="#888" /></FontCombo>
            <FontCombo $w={49}><Caret $c="#888" /></FontCombo>
            <Sep $w={6} />
            <B n="fontA" /><B n="brush" /><B n="bucket" /><Bd n="line" w={30} /><Sep $w={9} />
            <B n="shadow" /><Bd n="fill2" w={29} /><B n="shape" /><Bd n="arrows" w={30} /><Sep $w={8} />
            <B n="hdr1" /><B n="hdr2" /><B n="hdr3" /><Sep />
            <B n="ret" /><B n="win" /><B n="chain" /><B n="brace" /><B n="hash" /><B n="dbl" />
            <Chev><ChevGlyph /></Chev>
          </Pill>
          <Pill $h={25} $ml={2}>
            <Grip $before={2} $after={1} />
            <B n="org" /><Sep />
            <B n="front" /><B n="back" /><Sep />
            <B n="al1" /><B n="al2" /><B n="al3" /><Sep />
            <B n="al4" /><B n="al5" /><B n="al6" /><Sep />
            <B n="sp1" /><B n="sp2" />
            <Chev $ml={3}><ChevGlyph /></Chev>
          </Pill>
        </ToolRow>
      </Chrome>
      <Dock>
        <LeftCol>
          <TopRow>
            <Panel $w={164}>
              <Head title="Toolbox" />
              <ToolFrame>
                <Strip><Ico n="tChevDn" s={10} vb={10} /></Strip>
                <ToolList>
                  {toolItems.map(([ic, t, on, hot]) => (
                    <ToolItem key={t} $on={on} $hot={hot}><ToolIconBox><Ico n={ic} s={ic === "cursor" ? 16 : 13} /></ToolIconBox>{t}</ToolItem>
                  ))}
                </ToolList>
                <ScrollV $w={18}>
                  <ScrollBtn $h={22}><Ico n="chevUp" s={10} vb={10} /></ScrollBtn>
                  <ScrollTrack $t={5}><ThumbV $h={96} /></ScrollTrack>
                  <ScrollBtn $h={20}><Ico n="chevDn" s={10} vb={10} /></ScrollBtn>
                </ScrollV>
              </ToolFrame>
            </Panel>
            <Panel>
              <MainHead>Main (Logical View)</MainHead>
              <MainFrame>
                <DocTabs>
                  <DocTab><Ico n="tDiag" />Main</DocTab>
                </DocTabs>
                <CanvasGrid>
                  <Canvas>
                    <ClassBox><ClassName>Softpedia</ClassName><ClassSlot /></ClassBox>
                    <PkgTab />
                    <PkgBody>Package1</PkgBody>
                    <Lollipop />
                    <LollipopLabel>Softpedia</LollipopLabel>
                    <NavBtn><Ico n="move" s={11} vb={13} /></NavBtn>
                  </Canvas>
                  <ScrollV $w={16}>
                    <ScrollBtn $h={20}><Ico n="chevUp" s={10} vb={10} /></ScrollBtn>
                    <ScrollTrack><ThumbV $h={17} /></ScrollTrack>
                    <ScrollBtn $h={17}><Ico n="chevDn" s={10} vb={10} /></ScrollBtn>
                  </ScrollV>
                  <ScrollH>
                    <ScrollHBtn><Ico n="chevL" s={10} vb={10} /></ScrollHBtn>
                    <TrackH><ThumbH $w={59} /></TrackH>
                    <ScrollHBtn><Ico n="chevR" s={10} vb={10} /></ScrollHBtn>
                  </ScrollH>
                  <span />
                </CanvasGrid>
              </MainFrame>
            </Panel>
          </TopRow>
          <OutputPanel>
            <Head title="Output" m="0 1px 0 0" />
            <OutFrame>
              <OutList>
                {log.map(([t, m], i) => <OutRow key={i}><OutTime>{t}</OutTime>{m}</OutRow>)}
              </OutList>
              <ScrollV $w={15}>
                <ScrollTrack $t={54}><ThumbV $h={19} /></ScrollTrack>
                <ScrollBtn $h={16}><Ico n="chevDn" s={10} vb={10} /></ScrollBtn>
              </ScrollV>
            </OutFrame>
            <TabBar $pl={5} $mt={2}>
              <Tab $on $w={64} $pl={5} $gap={6}><Ico n="tabOut" s={14} vb={16} />Output</Tab>
              <Tab $w={80} $gap={6}><Ico n="tabMsg" s={14} vb={16} />Messages</Tab>
            </TabBar>
          </OutputPanel>
        </LeftCol>
        <RightCol>
          <Panel $h={237}>
            <Head title="Model Explorer" up />
            <ModelBar>
              <MBtn $w={24}><Ico n="sort12" /></MBtn>
              <MBtn $w={28}><Ico n="sortAB" /></MBtn>
              <MSep $l={0} $r={6} />
              <MBtn $w={22}><Ico n="funnel" /></MBtn>
              <MSep $l={4} $r={5} />
              <MBtn $w={24}><Ico n="arrUp" s={14} /></MBtn>
              <MBtn $w={24}><Ico n="arrDn" s={14} /></MBtn>
            </ModelBar>
            <TreeFrame>
              <Tree>
                {tree.map((r, i) => (
                  <TreeRow key={i}>
                    {r.cells.map((c, j) => (
                      <Cell key={j} $v={c.v} $h={c.h || c.ex}>{c.ex && <Expander $plus={c.ex === "+"} />}</Cell>
                    ))}
                    <TreeIcon $deep={r.deep}><Ico n={r.icon} /></TreeIcon>
                    <TreeLabel $sel={r.sel}>{r.label}</TreeLabel>
                  </TreeRow>
                ))}
              </Tree>
              <ScrollV>
                <ScrollBtn $h={17}><Ico n="chevUp" s={10} vb={10} /></ScrollBtn>
                <ScrollTrack><ThumbV $h={102} /></ScrollTrack>
                <ScrollBtn $h={17}><Ico n="chevDn" s={10} vb={10} /></ScrollBtn>
              </ScrollV>
            </TreeFrame>
            <TabBar $h={24} $mt={2} $pl={5}>
              <Tab $on $w={101} $pl={3} $gap={5}><Ico n="tabModel" />Model Explorer</Tab>
              <Tab $w={112} $pl={5} $gap={6}><Ico n="tabDiag" />Diagram Explorer</Tab>
            </TabBar>
          </Panel>
          <Panel $h={183}>
            <Head title="Properties" up m="3px 1px 0 0" />
            <SubHead>(UMLClassDiagram) Main</SubHead>
            <PropFrame>
              <PropGroup><GroupBox />General</PropGroup>
              <PropRow><PropGutter /><PropName><PropIcon><Ico n="diamond" s={10} vb={11} /></PropIcon>Name</PropName><PropVal>Main</PropVal></PropRow>
              <PropRow><PropGutter /><PropName><PropIcon><Ico n="lock" s={10} vb={11} /></PropIcon>DiagramType</PropName><PropVal /></PropRow>
              <PropRow><PropGutter /><PropName $last><PropIcon><Ico n="diamond" s={10} vb={11} /></PropIcon>DefaultDiagram</PropName><PropVal $last $pl={3}><Check><Ico n="check" s={10} vb={10} /></Check></PropVal></PropRow>
            </PropFrame>
            <TabBar $h={25} $mt={2} $pl={5}>
              <Tab $on $w={80} $h={22} $pl={3} $gap={5}><Ico n="tabProp" />Properties</Tab>
              <Tab $w={102} $h={22} $pl={3} $gap={7}><Ico n="tabDoc" s={15} />Documentation</Tab>
              <Tab $div $w={45} $h={22} $pl={4} $gap={6}><Ico n="tabAttr" />Att</Tab>
              <ArrowBtn $l={232}><Ico n="triL" s={11} vb={12} /></ArrowBtn>
              <ArrowBtn $l={247} $on><Ico n="triR" s={11} vb={12} /></ArrowBtn>
            </TabBar>
            <Watermark>SOFTPEDIA</Watermark>
          </Panel>
        </RightCol>
      </Dock>
      <StatusBar>
        <StatusPane $w={67} />
        <StatusPane $w={97} />
        <StatusPane $w={838}>(UMLClassDiagram) ::Logical View::Main</StatusPane>
        <Resize />
      </StatusBar>
    </Window>
  );
}
